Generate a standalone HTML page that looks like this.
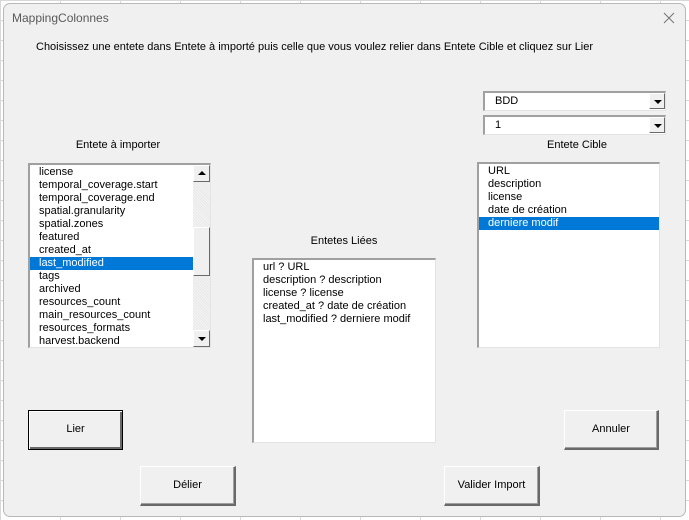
<!DOCTYPE html>
<html><head><meta charset="utf-8"><style>
*{box-sizing:border-box;margin:0;padding:0}
body{width:689px;height:520px;overflow:hidden;position:relative;background:#fff;font-family:"Liberation Sans",sans-serif;font-size:11px;color:#000;
background-image:linear-gradient(#d8d8d8 1px,transparent 1px),linear-gradient(90deg,#d8d8d8 1px,transparent 1px);background-size:60px 20px;}
.dlg{position:absolute;left:3px;top:3px;width:683px;height:514px;background:#f0f0f0;border:1px solid #b8b8b8;border-radius:7px;}
.a{position:absolute}
.title{left:8px;top:7px;font-size:12px;color:#5a5a5a}
.list{background:#fff;border-top:2px solid #a0a0a0;border-left:2px solid #a0a0a0;border-right:1px solid #e3e3e3;border-bottom:1px solid #e3e3e3;overflow:hidden;padding-top:1px}
.list div{height:13px;line-height:13px;padding-left:9px;white-space:nowrap}
.sel{background:#0078d7;color:#fff}
.btn{background:#f0f0f0;border:1px solid #fff;border-right:2px solid #696969;border-bottom:2px solid #696969;box-shadow:inset -1px -1px #a0a0a0;text-align:center;line-height:37px;font-size:11px}
.combo{background:#fff;border-top:2px solid #a0a0a0;border-left:2px solid #a0a0a0;border-right:1px solid #e3e3e3;border-bottom:1px solid #e3e3e3;padding-left:10px;line-height:16px}
.arr{position:absolute;right:0;top:0;width:16px;height:16px;background:#f0f0f0;border:1px solid #fff;border-right:1px solid #696969;border-bottom:1px solid #696969;}
.arr:after{content:"";position:absolute;left:4px;top:6px;border-left:4px solid transparent;border-right:4px solid transparent;border-top:4px solid #000}
.lbl{text-align:center}
</style></head><body>
<div class="dlg">
<div class="a title">MappingColonnes</div>
<svg class="a" style="left:659px;top:8px" width="12" height="12" viewBox="0 0 12 12"><path d="M1 1L11 11M11 1L1 11" stroke="#777" stroke-width="1.1"/></svg>
<div class="a" style="left:32px;top:37px">Choisissez une entete dans Entete à importé puis celle que vous voulez relier dans Entete Cible et cliquez sur Lier</div>

<div class="a combo" style="left:479px;top:87px;width:183px;height:20px">BDD<div class="arr"></div></div>
<div class="a combo" style="left:479px;top:111px;width:183px;height:20px">1<div class="arr"></div></div>

<div class="a lbl" style="left:39px;top:135px;width:150px">Entete à importer</div>
<div class="a lbl" style="left:498px;top:135px;width:150px">Entete Cible</div>
<div class="a lbl" style="left:265px;top:231px;width:150px">Entetes Liées</div>

<div class="a list" style="left:24px;top:159px;width:183px;height:185px">
<div>license</div><div>temporal_coverage.start</div><div>temporal_coverage.end</div><div>spatial.granularity</div><div>spatial.zones</div><div>featured</div><div>created_at</div><div class="sel" style="margin-right:17px">last_modified</div><div>tags</div><div>archived</div><div>resources_count</div><div>main_resources_count</div><div>resources_formats</div><div>harvest.backend</div>
<div class="a" style="right:0;top:0;width:17px;height:182px;background:repeating-linear-gradient(45deg,#f4f4f4 0 1px,#e8e8e8 1px 2px);padding:0">
 <div class="a" style="left:0;top:0;width:17px;height:17px;background:#f0f0f0;border:1px solid #fff;border-right:1px solid #696969;border-bottom:1px solid #696969;padding:0"><div class="a" style="left:4px;top:5px;width:0;height:0;padding:0;border-left:4px solid transparent;border-right:4px solid transparent;border-bottom:4px solid #000"></div></div>
 <div class="a" style="left:0;top:62px;width:17px;height:49px;background:#f0f0f0;border:1px solid #fff;border-right:1px solid #696969;border-bottom:1px solid #696969;padding:0"></div>
 <div class="a" style="left:0;bottom:0;width:17px;height:17px;background:#f0f0f0;border:1px solid #fff;border-right:1px solid #696969;border-bottom:1px solid #696969;padding:0"><div class="a" style="left:4px;top:6px;width:0;height:0;padding:0;border-left:4px solid transparent;border-right:4px solid transparent;border-top:4px solid #000"></div></div>
</div>
</div>

<div class="a list" style="left:248px;top:254px;width:184px;height:185px">
<div>url ? URL</div><div>description ? description</div><div>license ? license</div><div>created_at ? date de création</div><div>last_modified ? derniere modif</div>
</div>

<div class="a list" style="left:473px;top:158px;width:183px;height:186px">
<div>URL</div><div>description</div><div>license</div><div>date de création</div><div class="sel">derniere modif</div>
</div>

<div class="a btn" style="left:24px;top:406px;width:95px;height:40px;border:1px solid #000;box-shadow:inset 1px 1px #fff,inset -2px -2px #696969">Lier</div>
<div class="a btn" style="left:560px;top:406px;width:95px;height:40px">Annuler</div>
<div class="a btn" style="left:136px;top:462px;width:96px;height:40px">Délier</div>
<div class="a btn" style="left:440px;top:462px;width:96px;height:40px">Valider Import</div>
</div>
</body></html>
